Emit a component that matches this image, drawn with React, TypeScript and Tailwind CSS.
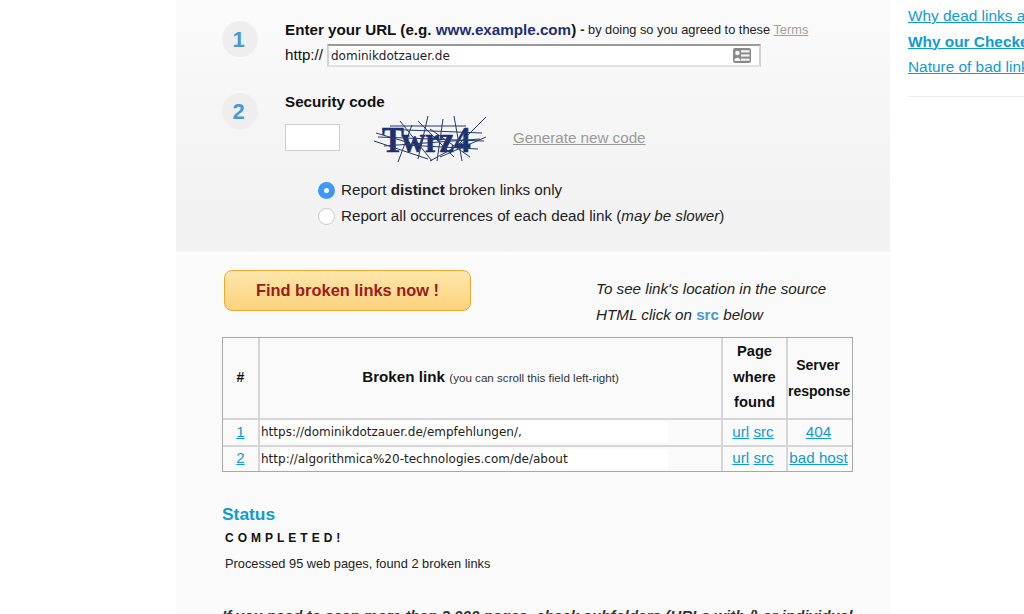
import React from "react";

const sans = "font-['Liberation_Sans',Arial,sans-serif]";
const link = "text-[#0f9bd7] underline";
const cell = "border-l-2 border-t-2 border-[#d6d6d6]";
const firstCell = "border-t-2 border-[#d6d6d6]";
const headCell = "border-l-2 border-[#d6d6d6]";

function Step({ n }: { n: string }) {
  return (
    <div className="flex h-[36px] w-[36px] shrink-0 items-center justify-center rounded-full bg-[#eeeeee] pr-[3px] text-[22px] font-bold text-[#4a98cf]">
      {n}
    </div>
  );
}

function Captcha() {
  const lines = [
    "M12 14 L112 18", "M8 22 L114 26", "M14 31 L110 24", "M4 26 L58 44", "M30 6 L62 46", "M58 1 L48 44",
    "M84 1 L92 46", "M116 2 L88 30", "M28 47 L42 10", "M70 42 L116 22", "M36 30 L108 34", "M73 4 L67 46",
    "M60 14 L100 42", "M20 11 L96 11", "M48 6 L84 42", "M60 46 L96 26", "M6 18 L40 28",
  ];
  return (
    <svg width="118" height="48" viewBox="0 0 118 48" className="block">
      <text
        transform="translate(12 37) scale(0.91 1)"
        fontFamily="'Liberation Serif', serif"
        fontWeight="700"
        fontSize="36"
        fill="#1c2f70"
        stroke="#1c2f70"
        strokeWidth="0.6"
      >
        Twrz4
      </text>
      {lines.map((d) => (
        <path key={d} d={d} stroke="#26396f" strokeWidth="1" fill="none" />
      ))}
    </svg>
  );
}

function AddressCardIcon() {
  return (
    <svg width="18" height="15" viewBox="0 0 18 15" className="block">
      <rect x="0" y="0" width="18" height="15" rx="2" fill="#8a8a8a" />
      <rect x="8" y="2.2" width="8.5" height="2.2" fill="#f4f4f4" />
      <rect x="8" y="6.4" width="8.5" height="2.2" fill="#f4f4f4" />
      <rect x="8" y="10.6" width="8.5" height="2.2" fill="#f4f4f4" />
      <circle cx="4.4" cy="5" r="2.3" fill="#f4f4f4" />
      <path d="M1.3 13 C1.3 8.8 7.5 8.8 7.5 13 Z" fill="#f4f4f4" />
    </svg>
  );
}

function UrlCell({ text }: { text: string }) {
  return (
    <td className={`${cell} p-0 pb-[1px] text-left align-middle`}>
      <div className="flex h-[20px] w-[408px] items-center bg-white pl-[1px] font-['DejaVu_Sans',sans-serif] text-[12px] text-[#222]">
        {text}
      </div>
    </td>
  );
}

export default function App() {
  return (
    <div className={`flex h-[614px] w-[1024px] overflow-hidden bg-white ${sans} text-[#111]`}>
      <div className="w-[176px] shrink-0" />
      <main className="flex w-[714px] shrink-0 flex-col">
        <section className="h-[252px] shrink-0 bg-gradient-to-b from-[#fbfbfb] via-[#f3f3f3] via-70% to-[#f2f2f2] pl-[46px] pt-[21px]">
          <div className="flex">
            <Step n="1" />
            <div className="ml-[27px] -mt-[1px]">
              <div className="flex h-[20px] items-center whitespace-nowrap text-[12.8px]">
                <b className="text-[15.2px]">
                  Enter your URL (e.g. <span className="text-[#1f2f72]">www.example.com</span>)
                </b>
                <span className="ml-[4px] text-[#222]">
                  <b>-</b> by doing so you agreed to these <span className="text-[#a0a0a0] underline">Terms</span>
                </span>
              </div>
              <div className="mt-[4px] flex items-center">
                <span className="text-[15.2px]">http://</span>
                <div className="ml-[4px] flex h-[23px] w-[434px] items-center justify-between border-x-2 border-b-2 border-t-2 border-x-[#d2d2d2] border-b-[#e0e0e0] border-t-[#999999] bg-white pl-[2px] pr-[8px] font-['DejaVu_Sans',sans-serif] text-[12px] text-[#222]">
                  dominikdotzauer.de
                  <AddressCardIcon />
                </div>
              </div>
            </div>
          </div>
          <div className="mt-[26px] flex">
            <Step n="2" />
            <div className="ml-[27px]">
              <div className="-mt-[1px] flex h-[20px] items-center text-[15.2px] font-bold">Security code</div>
              <div className="mt-[3px] flex items-start">
                <div className="mt-[9px] h-[27px] w-[55px] border border-[#cfcfcf] bg-white" />
                <div className="ml-[30px]">
                  <Captcha />
                </div>
                <span className="ml-[25px] mt-[12px] text-[15.2px] text-[#9a9a9a] underline">Generate new code</span>
              </div>
            </div>
          </div>
          <div className="ml-[96px] mt-[18px] flex flex-col gap-[8px] text-[15.2px] text-[#222]">
            <div className="flex h-[18px] items-center">
              <span className="flex h-[17px] w-[17px] items-center justify-center rounded-full bg-[#3b99fc]">
                <span className="h-[5px] w-[5px] rounded-full bg-white" />
              </span>
              <span className="ml-[6px]">
                Report <b>distinct</b> broken links only
              </span>
            </div>
            <div className="flex h-[18px] items-center">
              <span className="h-[17px] w-[17px] rounded-full border border-[#c8c8c8] bg-white" />
              <span className="ml-[6px]">
                Report all occurrences of each dead link (<i>may be slower</i>)
              </span>
            </div>
          </div>
        </section>
        <section className="mt-[3px] flex-1 bg-[#fafafa] pl-[46px] pt-[15px]">
          <div className="flex items-start">
            <button className="ml-[2px] h-[41px] w-[247px] rounded-[8px] border border-[#efa92e] bg-gradient-to-b from-[#fee6ac] to-[#fdd27c] text-[16.4px] font-bold text-[#9a1c1c]">
              Find broken links now !
            </button>
            <div className="ml-[125px] mt-[6px] text-[15.2px] italic leading-[26px] text-[#222]">
              To see link's location in the source
              <br />
              HTML click on <b className="not-italic text-[#4a98cf]">src</b> below
            </div>
          </div>
          <table className="mt-[9px] w-[631px] table-fixed border-separate border-spacing-0 border border-[#a8a8a8] text-center">
            <colgroup>
              <col className="w-[35px]" />
              <col className="w-[463px]" />
              <col className="w-[65px]" />
              <col className="w-[66px]" />
            </colgroup>
            <tbody>
              <tr className="h-[80px]">
                <th className="pb-[1px] text-[14px] font-bold">#</th>
                <th className={`${headCell} pb-[3px] font-normal`}>
                  <b className="text-[15.2px]">Broken link</b> <span className="text-[11.6px] text-[#333]">(you can scroll this field left-right)</span>
                </th>
                <th className={`${headCell} pb-[1px] text-[14.7px] font-bold leading-[25.5px]`}>
                  Page
                  <br />
                  where
                  <br />
                  found
                </th>
                <th className={`${headCell} pb-[1px] pr-[4px] text-[14px] font-bold leading-[26px]`}>
                  Server
                  <br />
                  response
                </th>
              </tr>
              <tr className="h-[27px] text-[15.2px]">
                <td className={`${firstCell} pb-[1px]`}><span className={link}>1</span></td>
                <UrlCell text="https://dominikdotzauer.de/empfehlungen/," />
                <td className={`${cell} pb-[1px] pr-[3px]`}><span className={link}>url</span> <span className={link}>src</span></td>
                <td className={`${cell} pb-[1px] pr-[3px]`}><span className={link}>404</span></td>
              </tr>
              <tr className="h-[26px] text-[15.2px]">
                <td className={`${firstCell} pb-[1px]`}><span className={link}>2</span></td>
                <UrlCell text="http://algorithmica%20-technologies.com/de/about" />
                <td className={`${cell} pb-[1px] pr-[3px]`}><span className={link}>url</span> <span className={link}>src</span></td>
                <td className={`${cell} whitespace-nowrap pb-[1px] pr-[3px]`}><span className={link}>bad host</span></td>
              </tr>
            </tbody>
          </table>
          <h2 className="mt-[31px] text-[17.4px] font-bold leading-[22px] text-[#0f9bd7]">Status</h2>
          <div className="ml-[3px] mt-[5px] text-[12px] font-bold leading-[16px] tracking-[4px] text-[#111]">COMPLETED!</div>
          <div className="ml-[3px] mt-[10px] text-[12.8px] leading-[16px] text-[#222]">Processed 95 web pages, found 2 broken links</div>
          <div className="mt-[34px] whitespace-nowrap text-[15.2px] font-bold italic leading-[20px] text-[#333]">
            If you need to scan more than 3,000 pages, check subfolders (URLs with /) or individual
          </div>
        </section>
      </main>
      <aside className="ml-[18px] w-[116px] shrink-0 overflow-hidden whitespace-nowrap pt-[3px] text-[15.4px] leading-[25.5px]">
        <div className={link}>Why dead links are bad</div>
        <div className={`${link} font-bold`}>Why our Checker</div>
        <div className={link}>Nature of bad links</div>
        <div className="mt-[16px] h-px bg-[#ececec]" />
      </aside>
    </div>
  );
}
